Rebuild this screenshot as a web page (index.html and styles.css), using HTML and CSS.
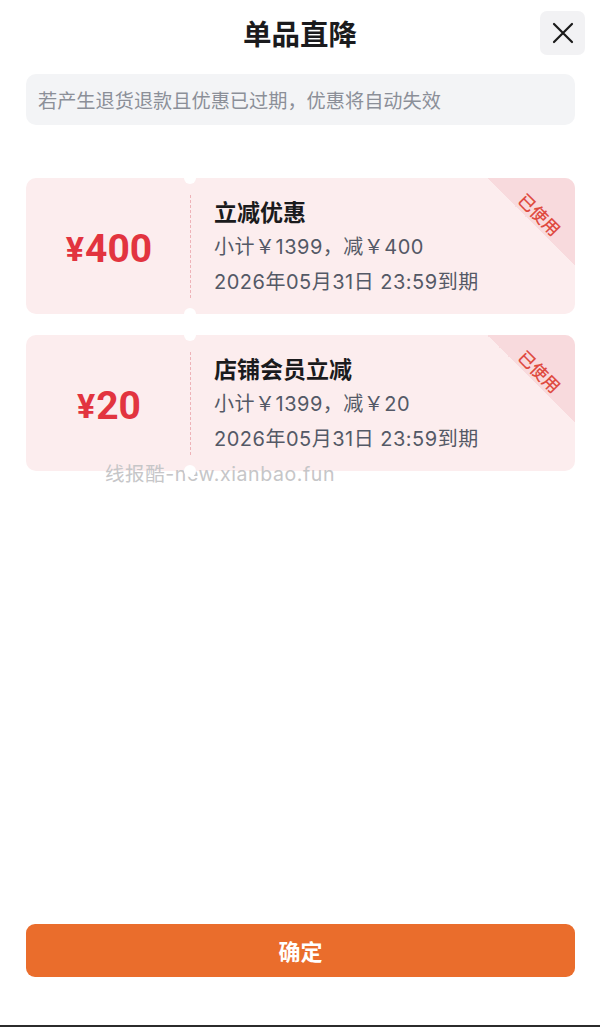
FILE: index.html
```html
<!DOCTYPE html>
<html lang="zh">
<head>
<meta charset="utf-8">
<link rel="stylesheet" href="styles.css">
</head>
<body>
<div class="page">
  <div class="header">
    <div></div>
    <h1 class="title">单品直降</h1>
    <button class="close" aria-label="关闭">
      <svg width="22" height="22" viewBox="0 0 22 22"><path d="M2 2 L20 20 M20 2 L2 20" stroke="#1a1a1a" stroke-width="2.2" stroke-linecap="round" fill="none"/></svg>
    </button>
  </div>
  <div class="notice">若产生退货退款且优惠已过期，优惠将自动失效</div>

  <div class="list">
    <div class="card">
      <div class="amount"><span class="yen">¥</span>400</div>
      <div class="divider"></div>
      <div class="info">
        <div class="name">立减优惠</div>
        <div class="line">小计￥1399，减￥400</div>
        <div class="line">2026年05月31日 23:59到期</div>
      </div>
      <div class="ribbon"><span class="ribbon-text">已使用</span></div>
    </div>
    <div class="card">
      <div class="amount"><span class="yen">¥</span>20</div>
      <div class="divider"></div>
      <div class="info">
        <div class="name">店铺会员立减</div>
        <div class="line">小计￥1399，减￥20</div>
        <div class="line">2026年05月31日 23:59到期</div>
      </div>
      <div class="ribbon"><span class="ribbon-text">已使用</span></div>
      <div class="watermark">线报酷-new.xianbao.fun</div>
    </div>
  </div>

  <button class="confirm">确定</button>
</div>
</body>
</html>
```

FILE: styles.css
```css
* { box-sizing: border-box; }
html, body { margin: 0; padding: 0; background: #fff; }
body {
  font-family: Inter, "Noto Sans CJK SC", sans-serif;
}
.page {
  height: 1027px;
  display: flex;
  flex-direction: column;
  border-bottom: 2px solid #2b2b2b;
}
.header {
  display: grid;
  grid-template-columns: 1fr auto 1fr;
  align-items: center;
  padding: 11px 15px 0 15px;
  height: 55px;
}
.title {
  margin: 0;
  font-family: "Noto Sans CJK SC", sans-serif;
  font-size: 28.5px;
  font-weight: 700;
  color: #1b1b1d;
  line-height: 44px;
}
.close {
  justify-self: end;
  width: 45px;
  height: 44px;
  border: none;
  border-radius: 7px;
  background: #f2f2f4;
  display: flex;
  align-items: center;
  justify-content: center;
  padding: 0;
}
.notice {
  margin: 19px 25px 0 26px;
  height: 51px;
  background: #f3f4f6;
  border-radius: 10px;
  padding: 0 12px;
  display: flex;
  align-items: center;
  font-family: "Noto Sans CJK SC", sans-serif;
  font-size: 19.2px;
  color: #8b8f98;
}
.list {
  margin: 53px 25px 0 26px;
  display: flex;
  flex-direction: column;
  gap: 21px;
}
.card {
  position: relative;
  height: 136px;
  background: #fcedee;
  border-radius: 10px;
  display: flex;
}
.card::before, .card::after {
  content: "";
  position: absolute;
  left: 158px;
  width: 12px;
  height: 12px;
  border-radius: 50%;
  background: #fff;
}
.card::before { top: -6px; }
.card::after { bottom: -6px; }
.amount {
  width: 164px;
  display: flex;
  align-items: center;
  justify-content: center;
  font-family: Roboto, "Liberation Sans", sans-serif;
  font-weight: 700;
  font-size: 39px;
  color: #e2343f;
  padding: 6px 0 0 2px;
}
.yen {
  font-size: 34px;
  margin-right: 1px;
}
.divider {
  border-left: 1.5px dashed #eeb3b8;
  margin: 17px 0 16px;
}
.info {
  padding: 16px 0 0 23px;
  display: flex;
  flex-direction: column;
}
.name {
  font-family: "Noto Sans CJK SC", sans-serif;
  font-size: 23px;
  font-weight: 700;
  color: #1b1b1d;
  line-height: 34px;
  margin-bottom: 2px;
}
.line {
  font-size: 20px;
  color: #545966;
  line-height: 35px;
  letter-spacing: 0.5px;
}
.ribbon {
  position: absolute;
  top: 0;
  right: 0;
  width: 88px;
  height: 88px;
  border-top-right-radius: 10px;
  background: linear-gradient(to bottom left, #f8dadd 50%, transparent 50%);
  overflow: hidden;
}
.ribbon-text {
  position: absolute;
  left: 53px;
  top: 36px;
  transform: translate(-50%, -50%) rotate(45deg);
  font-family: "Noto Sans CJK SC", sans-serif;
  font-size: 17px;
  font-weight: 500;
  color: #df4a40;
  white-space: nowrap;
  line-height: 1;
}
.watermark {
  position: absolute;
  left: 79px;
  top: 126px;
  font-size: 19.5px;
  letter-spacing: 0.6px;
  color: #c6c6c8;
  white-space: nowrap;
  line-height: 26px;
}
.confirm {
  margin: auto 25px 48px 26px;
  height: 53px;
  border: none;
  border-radius: 9px;
  background: #ea6d2c;
  color: #fff;
  font-family: "Noto Sans CJK SC", sans-serif;
  font-size: 22px;
  font-weight: 700;
  padding-bottom: 3px;
}
```
